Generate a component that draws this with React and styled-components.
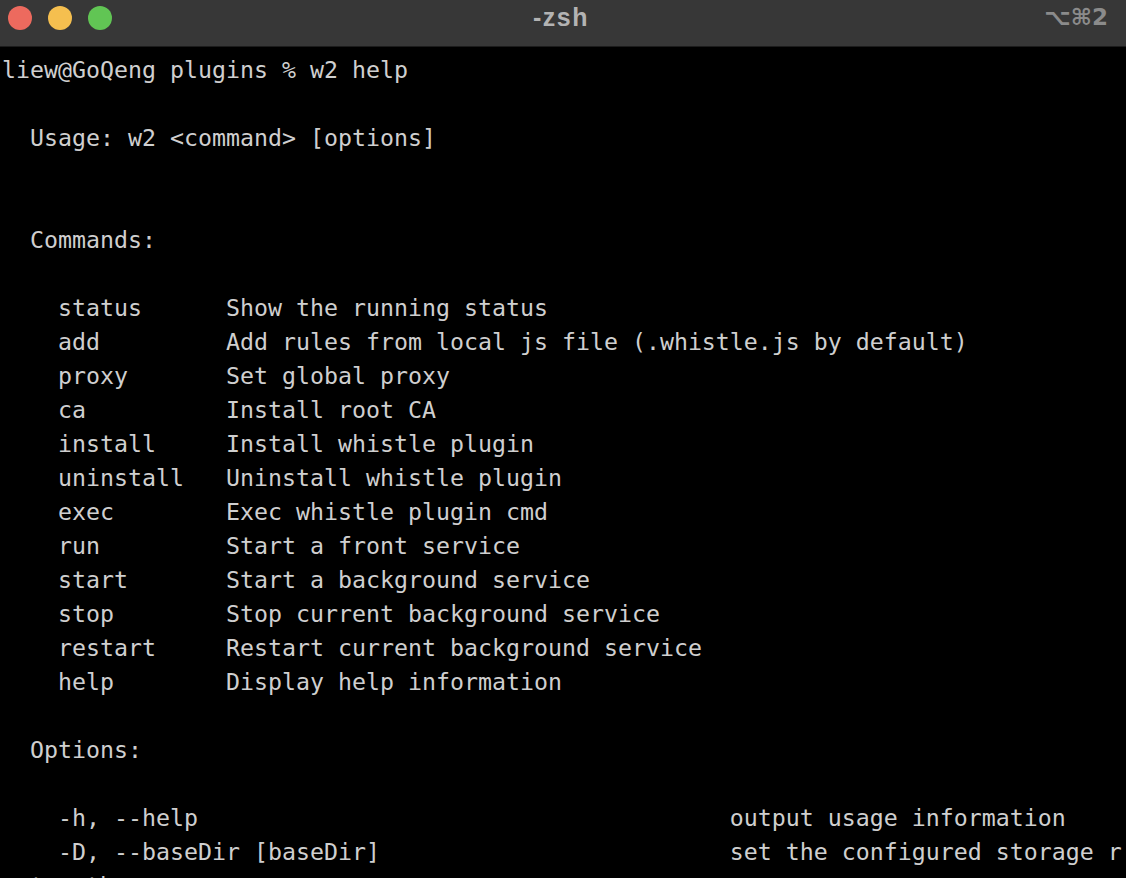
import styled, { createGlobalStyle } from 'styled-components'

const GlobalStyle = createGlobalStyle`
    html, body {
        margin: 0;
        padding: 0;
        background: #000;
        overflow: hidden;
    }
`

const Window = styled.div`
    width: 1126px;
    height: 878px;
    display: flex;
    flex-direction: column;
    background: #000;
    overflow: hidden;
`

const TitleBar = styled.div`
    flex: 0 0 46px;
    display: grid;
    grid-template-columns: 1fr auto 1fr;
    align-items: center;
    background: #373737;
    border-bottom: 1px solid #1c1c1c;
    padding: 0 18px 0 8px;
`

const Lights = styled.div`
    display: flex;
    gap: 16px;
    align-items: center;
    margin-top: -11px;
`

const Light = styled.span`
    width: 24px;
    height: 24px;
    border-radius: 50%;
    background: ${p => p.color};
`

const Title = styled.div`
    font-family: "Liberation Sans", Arial, sans-serif;
    font-weight: 700;
    font-size: 25px;
    letter-spacing: 1.5px;
    color: #b3b3b3;
    margin-top: -12px;
    margin-left: 6px;
`

const Shortcut = styled.div`
    justify-self: end;
    font-family: "DejaVu Sans", sans-serif;
    font-weight: 700;
    font-size: 23px;
    color: #8b8b8b;
    margin-top: -12px;
`

const Screen = styled.div`
    flex: 1;
    padding: 6px 0 0 2px;
    font-family: "DejaVu Sans Mono", monospace;
    font-size: 23.25px;
    line-height: 34px;
    color: #cfcfcf;
    white-space: pre;
`

const Line = styled.div`
    height: 34px;
    padding-left: ${p => p.indent || 0}ch;
`

const Row = styled.div`
    display: grid;
    grid-template-columns: ${p => p.col}ch auto;
    height: 34px;
    padding-left: 4ch;
`

const commands = [
    ['status', 'Show the running status'],
    ['add', 'Add rules from local js file (.whistle.js by default)'],
    ['proxy', 'Set global proxy'],
    ['ca', 'Install root CA'],
    ['install', 'Install whistle plugin'],
    ['uninstall', 'Uninstall whistle plugin'],
    ['exec', 'Exec whistle plugin cmd'],
    ['run', 'Start a front service'],
    ['start', 'Start a background service'],
    ['stop', 'Stop current background service'],
    ['restart', 'Restart current background service'],
    ['help', 'Display help information']
]

const options = [
    ['-h, --help', 'output usage information'],
    ['-D, --baseDir [baseDir]', 'set the configured storage r']
]

export default function App() {
    return (
        <>
            <GlobalStyle />
            <Window>
                <TitleBar>
                    <Lights>
                        <Light color='#ed6a5e' />
                        <Light color='#f5bf4f' />
                        <Light color='#61c554' />
                    </Lights>
                    <Title>-zsh</Title>
                    <Shortcut>⌥⌘2</Shortcut>
                </TitleBar>
                <Screen>
                    <Line>liew@GoQeng plugins % w2 help</Line>
                    <Line />
                    <Line indent={2}>Usage: w2 &lt;command&gt; [options]</Line>
                    <Line />
                    <Line />
                    <Line indent={2}>Commands:</Line>
                    <Line />
                    {commands.map(([name, desc]) => (
                        <Row key={name} col={12}>
                            <span>{name}</span>
                            <span>{desc}</span>
                        </Row>
                    ))}
                    <Line />
                    <Line indent={2}>Options:</Line>
                    <Line />
                    {options.map(([flag, desc]) => (
                        <Row key={flag} col={48}>
                            <span>{flag}</span>
                            <span>{desc}</span>
                        </Row>
                    ))}
                    <Line>oot path</Line>
                </Screen>
            </Window>
        </>
    )
}
